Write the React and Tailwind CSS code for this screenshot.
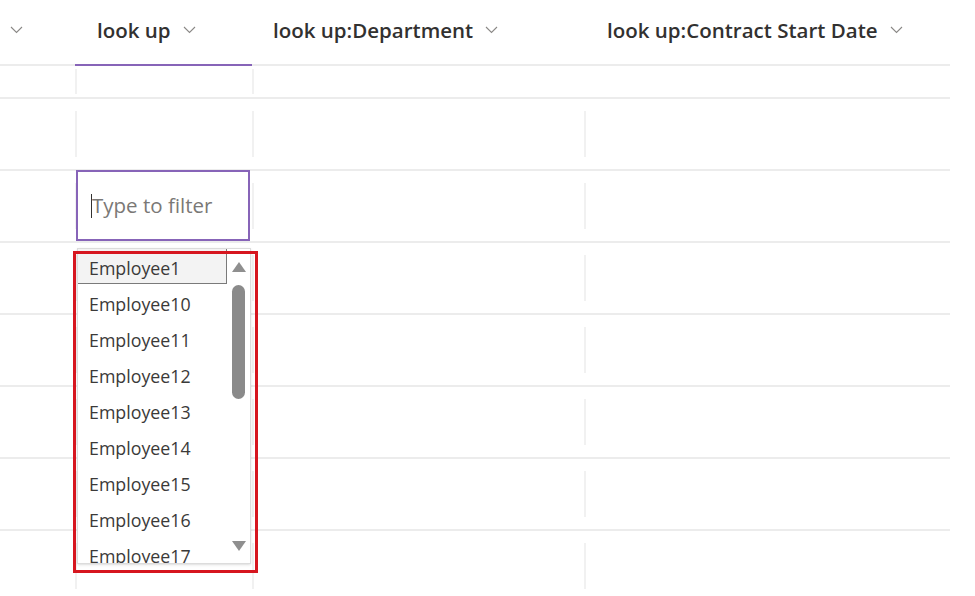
import React from "react";

const font = { fontFamily: '"Open Sans", "Noto Sans", sans-serif' };

function Chevron({ className = "" }) {
  return (
    <svg width="13" height="8" viewBox="0 0 13 8" className={className}>
      <path d="M1 1l5.5 5.5L12 1" fill="none" stroke="#8a8886" strokeWidth="1.1" />
    </svg>
  );
}

const employees = [
  "Employee1",
  "Employee10",
  "Employee11",
  "Employee12",
  "Employee13",
  "Employee14",
  "Employee15",
  "Employee16",
  "Employee17",
];

function Sep() {
  return <div className="w-[2px] shrink-0 my-3 bg-[#f1f1f1]" />;
}

function Row({ h = "h-[72px]", children }) {
  return (
    <div className={`flex w-[950px] border-t-2 border-[#ececec] ${h}`}>
      {children}
    </div>
  );
}

function Dropdown() {
  return (
    <>
      {/* list box */}
      <div className="absolute left-0 top-[77px] w-[174px] h-[316px] bg-white border border-[#dcdcdc] overflow-hidden flex z-10 shadow-sm">
        <div className="flex-1 flex flex-col">
          {employees.map((e, i) => (
            <div
              key={e}
              className={`h-[36px] shrink-0 flex items-center pl-[11px] pt-[4px] text-[17.8px] text-[#3b3a39] ${
                i === 0 ? "border border-[#7a7a7a] bg-[#f3f3f3] -ml-px -mt-px mr-[1px]" : ""
              }`}
            >
              {e}
            </div>
          ))}
        </div>
        {/* scrollbar */}
        <div className="w-[22px] shrink-0 relative">
          <div className="absolute left-[4px] top-[13px] w-0 h-0 border-l-[7px] border-r-[7px] border-b-[10px] border-l-transparent border-r-transparent border-b-[#8f8f8f]" />
          <div className="absolute left-[4px] top-[36px] w-[13px] h-[114px] rounded-full bg-[#8a8a8a]" />
          <div className="absolute left-[4px] top-[292px] w-0 h-0 border-l-[7px] border-r-[7px] border-t-[10px] border-l-transparent border-r-transparent border-t-[#8f8f8f]" />
        </div>
      </div>
      {/* highlight box */}
      <div className="absolute -left-[4px] top-[80px] w-[185px] h-[322px] border-[3px] border-[#d6161f] z-20 pointer-events-none" />
    </>
  );
}

export default function App() {
  const bodyRows = 7;
  return (
    <div className="w-[975px] h-[596px] bg-white overflow-hidden" style={font}>
      {/* header */}
      <div className="flex w-[950px] h-[64px]">
        <div className="w-[75px] shrink-0 flex items-center pl-[10px] pb-1">
          <Chevron />
        </div>
        <div className="w-[177px] shrink-0 flex items-center pl-[22px] gap-[12px] pb-1 border-b-2 border-[#8764b8] -mb-[2px] relative z-[1]">
          <span className="text-[20.5px] font-semibold text-[#323130]">look up</span>
          <Chevron />
        </div>
        <div className="w-[334px] shrink-0 flex items-center pl-[21px] gap-[12px] pb-1">
          <span className="text-[20.5px] font-semibold text-[#323130]">look up:Department</span>
          <Chevron />
        </div>
        <div className="flex-1 flex items-center pl-[21px] gap-[12px] pb-1">
          <span className="text-[20.5px] font-semibold text-[#323130]">look up:Contract Start Date</span>
          <Chevron />
        </div>
      </div>

      <Row h="h-[33px]">
        <div className="w-[75px] shrink-0" />
        <div className="w-[2px] shrink-0 my-[3px] bg-[#f1f1f1]" />
        <div className="w-[175px] shrink-0" />
        <div className="w-[2px] shrink-0 my-[3px] bg-[#f1f1f1]" />
        <div className="w-[330px] shrink-0" />
        <div className="flex-1" />
      </Row>

      {Array.from({ length: bodyRows }).map((_, i) => (
        <Row key={i}>
          <div className="w-[75px] shrink-0" />
          <Sep />
          <div className="w-[175px] shrink-0 relative">
            {i === 1 && (
              <>
                <div className="absolute -left-[1px] -top-[1px] w-[174px] h-[71px] border-2 border-[#8764b8] bg-white flex items-center pl-[13px] z-[5]">
                  <div className="w-px h-[24px] bg-[#323130]" />
                  <span className="text-[20.5px] text-[#7a7876]">Type to filter</span>
                </div>
                <Dropdown />
              </>
            )}
          </div>
          <Sep />
          <div className="w-[330px] shrink-0" />
          <Sep />
          <div className="flex-1" />
        </Row>
      ))}
    </div>
  );
}
